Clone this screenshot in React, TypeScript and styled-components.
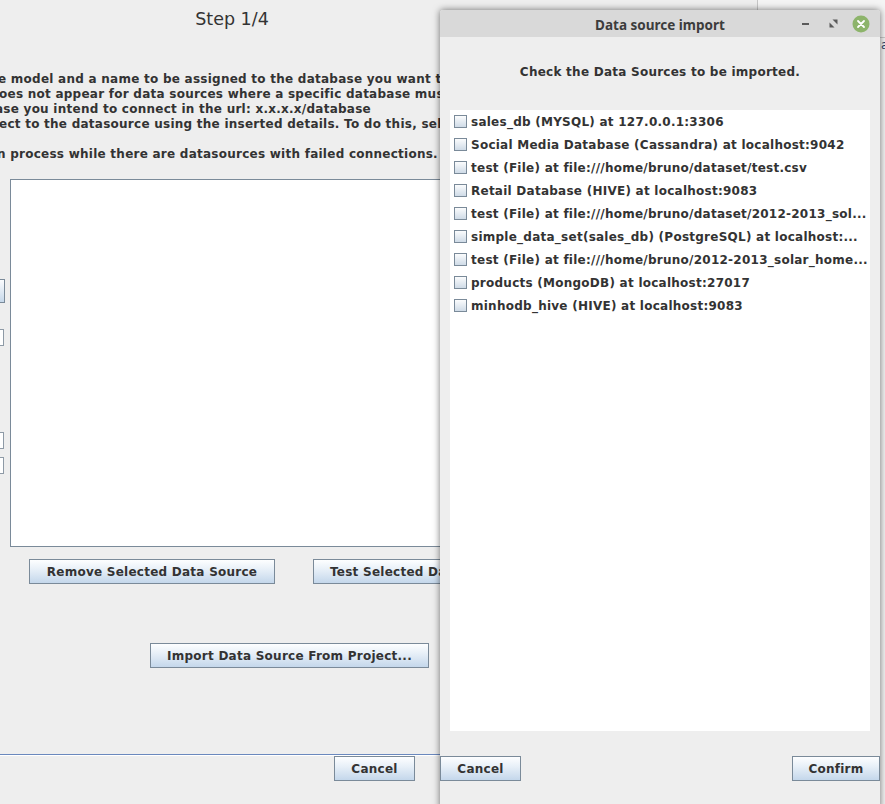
import { FunctionComponent } from 'react';
import styled, { createGlobalStyle } from 'styled-components';

const GlobalStyle = createGlobalStyle`
  html, body {
    margin: 0;
    padding: 0;
    background: #eeeeee;
  }
  body {
    font-family: 'DejaVu Sans', 'Liberation Sans', sans-serif;
    color: #333333;
  }
`;

const Desktop = styled.div`
  position: relative;
  width: 885px;
  height: 804px;
  overflow: hidden;
  display: flex;
`;

const MainWindow = styled.div`
  width: 757px;
  flex-shrink: 0;
  display: flex;
  flex-direction: column;
  background: #eeeeee;
  overflow: hidden;
`;

const StepTitle = styled.div`
  width: 464px;
  height: 38px;
  line-height: 38px;
  text-align: center;
  font-size: 17.5px;
  color: #333333;
`;

const Instructions = styled.div`
  padding-top: 34px;
  display: flex;
  flex-direction: column;
`;

const InstructionLine = styled.div<{ $offset: number }>`
  height: 15px;
  line-height: 15px;
  font-size: 12px;
  font-weight: 700;
  letter-spacing: 0.25px;
  white-space: nowrap;
  margin-left: ${(p) => p.$offset}px;
`;

const BodyRow = styled.div`
  margin-top: 17px;
  display: flex;
`;

const LeftStub = styled.div`
  width: 10px;
  display: flex;
  flex-direction: column;
  align-items: flex-start;
`;

const StubButton = styled.div<{ $top: number }>`
  margin-top: ${(p) => p.$top}px;
  width: 4px;
  height: 22px;
  border: 1px solid #7a8a99;
  border-left: none;
  background: linear-gradient(to bottom, #fbfcfe, #c6d8ea);
`;

const StubField = styled.div<{ $top: number }>`
  margin-top: ${(p) => p.$top}px;
  width: 3px;
  height: 15px;
  border: 1px solid #8e9aa6;
  border-left: none;
  background: #ffffff;
`;

const SourceList = styled.div`
  width: 470px;
  height: 366px;
  border: 1px solid #7a8a99;
  background: #ffffff;
`;

const ButtonRow = styled.div<{ $top: number; $left: number; $gap?: number }>`
  margin-top: ${(p) => p.$top}px;
  padding-left: ${(p) => p.$left}px;
  display: flex;
  gap: ${(p) => p.$gap ?? 0}px;
`;

const MetalButton = styled.button<{ $width: number }>`
  width: ${(p) => p.$width}px;
  height: 25px;
  flex-shrink: 0;
  padding: 0;
  border: 1px solid #7a8a99;
  background: linear-gradient(to bottom, #fdfeff 0%, #e8f0f8 40%, #c4d7eb 100%);
  font-family: 'DejaVu Sans', 'Liberation Sans', sans-serif;
  font-size: 12px;
  font-weight: 700;
  letter-spacing: 0.25px;
  color: #333333;
  text-align: center;
  white-space: nowrap;
  overflow: hidden;
`;

const ClippedButton = styled(MetalButton)`
  text-align: left;
  padding-left: 16px;
`;

const Separator = styled.div<{ $top: number }>`
  margin-top: ${(p) => p.$top}px;
  height: 1px;
  background: #6a88bd;
  border-bottom: 1px solid #ffffff;
`;

const SideWindow = styled.div`
  flex: 1;
  background: #f2f2f2;
  border-left: 1px solid #c6c6c6;
  display: flex;
  flex-direction: column;
`;

const SideHeader = styled.div`
  height: 37px;
  border-bottom: 1px solid #c9c9c9;
  background: #f4f4f4;
`;

const SideGlyph = styled.div`
  padding-left: 123px;
  font-size: 12px;
  line-height: 14px;
  color: #2a3f6a;
`;

const Dialog = styled.div`
  position: absolute;
  left: 440px;
  top: 10px;
  width: 440px;
  height: 800px;
  display: flex;
  flex-direction: column;
  background: #eeeeee;
  box-shadow: 0 0 7px rgba(0, 0, 0, 0.55);
  border-radius: 3px 3px 0 0;
`;

const TitleBar = styled.div`
  height: 27px;
  display: grid;
  grid-template-columns: 1fr auto 1fr;
  align-items: center;
  background: #d9d9d9;
  border-radius: 3px 3px 0 0;
`;

const TitleText = styled.div`
  font-family: 'Noto Sans', 'DejaVu Sans', sans-serif;
  font-size: 13.5px;
  font-weight: 700;
  color: #3c3c3c;
  padding-top: 2px;
`;

const WindowControls = styled.div`
  justify-self: end;
  display: flex;
  align-items: center;
  padding-right: 5px;
`;

const ControlSlot = styled.div`
  width: 28px;
  height: 27px;
  display: flex;
  align-items: center;
  justify-content: center;
`;

const DialogHeading = styled.div`
  padding: 28px 0 30px;
  line-height: 15px;
  text-align: center;
  font-size: 12px;
  font-weight: 700;
  letter-spacing: 0.25px;
  color: #333333;
`;

const ImportList = styled.div`
  margin: 0 10px;
  height: 621px;
  background: #ffffff;
  display: flex;
  flex-direction: column;
`;

const ImportItem = styled.label`
  height: 23px;
  display: flex;
  align-items: center;
  padding-left: 4px;
  gap: 4px;
  font-size: 12px;
  font-weight: 700;
  letter-spacing: 0.25px;
  color: #333333;
  white-space: nowrap;
`;

const CheckBox = styled.span`
  width: 11px;
  height: 11px;
  flex-shrink: 0;
  border: 1px solid #7a8a99;
  background: linear-gradient(to bottom, #fbfcfd, #cfdbe7);
`;

const DialogButtons = styled.div`
  margin-top: 25px;
  display: flex;
  justify-content: space-between;
`;

const sources = [
  'sales_db (MYSQL) at 127.0.0.1:3306',
  'Social Media Database (Cassandra) at localhost:9042',
  'test (File) at file:///home/bruno/dataset/test.csv',
  'Retail Database (HIVE) at localhost:9083',
  'test (File) at file:///home/bruno/dataset/2012-2013_sol...',
  'simple_data_set(sales_db) (PostgreSQL) at localhost:...',
  'test (File) at file:///home/bruno/2012-2013_solar_home...',
  'products (MongoDB) at localhost:27017',
  'minhodb_hive (HIVE) at localhost:9083',
];

const instructionLines: { text: string; offset: number }[] = [
  { text: 'e model and a name to be assigned to the database you want to', offset: -2 },
  { text: 'oes not appear for data sources where a specific database must', offset: -1 },
  { text: 'ase you intend to connect in the url: x.x.x.x/database', offset: -5 },
  { text: 'ect to the datasource using the inserted details. To do this, select', offset: -1 },
  { text: '', offset: 0 },
  { text: 'n process while there are datasources with failed connections.', offset: -3 },
];

const MinimizeIcon = () => (
  <svg width="9" height="9" viewBox="0 0 9 9">
    <rect x="1" y="4" width="7" height="2" fill="#5a5a5a" />
  </svg>
);

const RestoreIcon = () => (
  <svg width="9" height="9" viewBox="0 0 9 9">
    <polygon points="3.5,0.5 8.5,0.5 8.5,5.5" fill="#5a5a5a" />
    <polygon points="0.5,3.5 0.5,8.5 5.5,8.5" fill="#5a5a5a" />
  </svg>
);

const CloseIcon = () => (
  <svg width="18" height="18" viewBox="0 0 18 18">
    <circle cx="9" cy="9" r="8.5" fill="#8db46b" />
    <path d="M6 6 L12 12 M12 6 L6 12" stroke="#ffffff" strokeWidth="1.8" strokeLinecap="round" />
  </svg>
);

const App: FunctionComponent = () => {
  return (
    <>
      <GlobalStyle />
      <Desktop>
        <MainWindow>
          <StepTitle>Step 1/4</StepTitle>
          <Instructions>
            {instructionLines.map((line, i) => (
              <InstructionLine key={i} $offset={line.offset}>
                {line.text}
              </InstructionLine>
            ))}
          </Instructions>
          <BodyRow>
            <LeftStub>
              <StubButton $top={100} />
              <StubField $top={26} />
              <StubField $top={86} />
              <StubField $top={8} />
            </LeftStub>
            <SourceList />
          </BodyRow>
          <ButtonRow $top={12} $left={29} $gap={38}>
            <MetalButton $width={246}>Remove Selected Data Source</MetalButton>
            <ClippedButton $width={220}>Test Selected Data Source</ClippedButton>
          </ButtonRow>
          <ButtonRow $top={59} $left={150}>
            <MetalButton $width={279}>Import Data Source From Project...</MetalButton>
          </ButtonRow>
          <Separator $top={86} />
          <ButtonRow $top={0} $left={334}>
            <MetalButton $width={81}>Cancel</MetalButton>
          </ButtonRow>
        </MainWindow>

        <SideWindow>
          <SideHeader />
          <SideGlyph>a</SideGlyph>
        </SideWindow>

        <Dialog>
          <TitleBar>
            <span />
            <TitleText>Data source import</TitleText>
            <WindowControls>
              <ControlSlot>
                <MinimizeIcon />
              </ControlSlot>
              <ControlSlot>
                <RestoreIcon />
              </ControlSlot>
              <ControlSlot>
                <CloseIcon />
              </ControlSlot>
            </WindowControls>
          </TitleBar>
          <DialogHeading>Check the Data Sources to be imported.</DialogHeading>
          <ImportList>
            {sources.map((s, i) => (
              <ImportItem key={i}>
                <CheckBox />
                {s}
              </ImportItem>
            ))}
          </ImportList>
          <DialogButtons>
            <MetalButton $width={81}>Cancel</MetalButton>
            <MetalButton $width={88}>Confirm</MetalButton>
          </DialogButtons>
        </Dialog>
      </Desktop>
    </>
  );
};

export default App;
